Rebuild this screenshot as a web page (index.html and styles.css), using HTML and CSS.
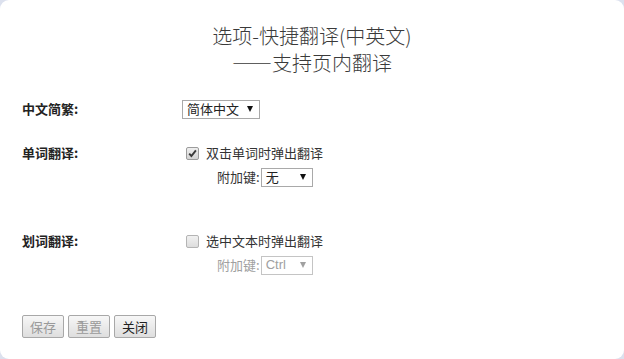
FILE: index.html
```html
<!DOCTYPE html>
<html lang="zh-CN">
<head>
<meta charset="utf-8">
<title>选项-快捷翻译(中英文)</title>
<link rel="stylesheet" href="styles.css">
</head>
<body>
<div class="panel">
  <h1 class="title">选项-快捷翻译(中英文)<br>——支持页内翻译</h1>

  <div class="row row-first">
    <div class="label">中文简繁:</div>
    <div class="controls">
      <div class="line">
        <span class="select select-wide"><span class="sel-text">简体中文</span><span class="arrow"></span></span>
      </div>
    </div>
  </div>

  <div class="row row-second">
    <div class="label">单词翻译:</div>
    <div class="controls">
      <div class="line check">
        <svg class="box" width="13" height="13" viewBox="0 0 13 13">
          <defs>
            <linearGradient id="g1" x1="0" y1="0" x2="0" y2="1">
              <stop offset="0" stop-color="#f0f0f0"/>
              <stop offset="1" stop-color="#d2d2d2"/>
            </linearGradient>
          </defs>
          <rect x="0.5" y="0.5" width="12" height="12" rx="1.5" fill="url(#g1)" stroke="#9c9c9c"/>
          <path d="M3.2 6.6 L5.4 9 L9.9 3.4" fill="none" stroke="#3a3a3a" stroke-width="1.9"/>
        </svg>
        <span class="check-text">双击单词时弹出翻译</span>
      </div>
      <div class="line sub">
        <span class="sub-label">附加键:</span><span class="select select-narrow"><span class="sel-text">无</span><span class="arrow"></span></span>
      </div>
    </div>
  </div>

  <div class="row row-third">
    <div class="label">划词翻译:</div>
    <div class="controls">
      <div class="line check">
        <svg class="box" width="13" height="13" viewBox="0 0 13 13">
          <defs>
            <linearGradient id="g2" x1="0" y1="0" x2="0" y2="1">
              <stop offset="0" stop-color="#f2f2f2"/>
              <stop offset="1" stop-color="#dcdcdc"/>
            </linearGradient>
          </defs>
          <rect x="0.5" y="0.5" width="12" height="12" rx="1.5" fill="url(#g2)" stroke="#b4b4b4"/>
        </svg>
        <span class="check-text">选中文本时弹出翻译</span>
      </div>
      <div class="line sub disabled">
        <span class="sub-label">附加键:</span><span class="select select-narrow"><span class="sel-text latin">Ctrl</span><span class="arrow"></span></span>
      </div>
    </div>
  </div>

  <div class="buttons">
    <button class="btn btn-disabled" type="button">保存</button>
    <button class="btn btn-disabled" type="button">重置</button>
    <button class="btn" type="button">关闭</button>
  </div>
</div>
</body>
</html>
```

FILE: styles.css
```css
html, body {
  margin: 0;
  padding: 0;
}

body {
  background: #dce1ee;
  font-family: "Noto Sans CJK SC", "Liberation Sans", sans-serif;
  font-size: 13px;
  line-height: 20px;
  color: #333;
}

.panel {
  background: #ffffff;
  border-radius: 9px;
  height: 359px;
  box-sizing: border-box;
  padding: 22px 22px 0 22px;
}

.title {
  margin: 0;
  text-align: center;
  font-size: 20px;
  line-height: 27px;
  font-weight: 300;
  color: #3a3a3a;
}

.row {
  display: grid;
  grid-template-columns: 160px auto;
  align-items: start;
}

.row-first { margin-top: 23px; }
.row-second { margin-top: 24px; }
.row-third { margin-top: 44px; }

.label {
  font-weight: bold;
  color: #222;
  line-height: 20px;
}

.controls {
  display: flex;
  flex-direction: column;
  gap: 4px;
}

.line {
  display: flex;
  align-items: center;
  height: 20px;
}

.check .box {
  margin-left: 4px;
  margin-right: 7px;
  flex: none;
}

.check-text {
  color: #333;
}

.sub {
  padding-left: 35px;
}

.sub-label {
  color: #333;
  margin-right: 1px;
}

.select {
  display: inline-flex;
  align-items: center;
  justify-content: space-between;
  box-sizing: border-box;
  height: 19px;
  border: 1px solid #a9a9a9;
  background: #fff;
  padding: 0 6px 0 4px;
  color: #222;
}

.select-wide { width: 78px; }
.select-narrow { width: 52px; }

.sel-text.latin {
  font-family: "Liberation Sans", sans-serif;
}

.arrow {
  width: 0;
  height: 0;
  border-left: 3.5px solid transparent;
  border-right: 3.5px solid transparent;
  border-top: 6px solid #111;
}

.disabled .sub-label,
.disabled .sel-text {
  color: #a0a0a0;
}

.disabled .select {
  border-color: #c4c4c4;
}

.disabled .arrow {
  border-top-color: #a0a0a0;
}

.buttons {
  display: flex;
  gap: 4px;
  margin-top: 40px;
}

.btn {
  font-family: "Noto Sans CJK SC", "Liberation Sans", sans-serif;
  font-size: 13px;
  line-height: 19px;
  height: 23px;
  padding: 0 7px;
  margin: 0;
  border: 1px solid #a8a8a8;
  border-radius: 2px;
  background: linear-gradient(#f7f7f7, #dedede);
  color: #222;
}

.btn-disabled {
  color: #9a9a9a;
}
```
